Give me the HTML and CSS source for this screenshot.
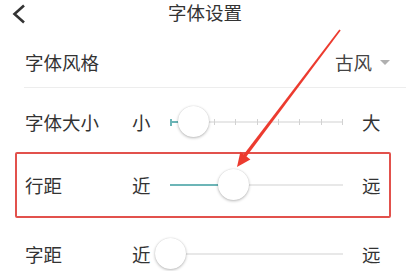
FILE: index.html
```html
<!DOCTYPE html>
<html lang="zh">
<head>
<meta charset="utf-8">
<link rel="stylesheet" href="styles.css">
</head>
<body>
<div class="page">
  <header class="header">
    <svg class="back" width="14" height="20" viewBox="0 0 14 20"><path d="M12 1.5 L2.5 10 L12 18.5" fill="none" stroke="#333" stroke-width="2.6" stroke-linejoin="miter"/></svg>
    <div class="title">字体设置</div>
    <span></span>
  </header>

  <div class="style-row">
    <span class="label">字体风格</span>
    <span class="value">古风<span class="caret"></span></span>
  </div>
  <div class="divider"></div>

  <div class="slider-row size-row">
    <span class="label">字体大小</span>
    <span class="small">小</span>
    <div class="track">
      <div class="line"></div>
      <div class="fill" style="width:23px"></div>
      <div class="ticks">
        <i class="on"></i><i></i><i></i><i></i><i></i><i></i><i></i><i></i><i></i>
      </div>
      <div class="thumb" style="left:23px"></div>
    </div>
    <span class="big">大</span>
  </div>

  <div class="slider-row boxed">
    <span class="label">行距</span>
    <span class="small">近</span>
    <div class="track">
      <div class="line"></div>
      <div class="fill" style="width:63px"></div>
      <div class="thumb" style="left:63px"></div>
    </div>
    <span class="big">远</span>
  </div>

  <div class="slider-row last-row">
    <span class="label">字距</span>
    <span class="small">近</span>
    <div class="track">
      <div class="line"></div>
      <div class="thumb" style="left:0px"></div>
    </div>
    <span class="big">远</span>
  </div>

  <svg class="arrow" width="406" height="271" viewBox="0 0 406 271">
    <polygon points="339.3,29.5 340.7,30.5 244.2,159.6 241.4,157.6" fill="#ec3b2f"/>
    <polygon points="237,167 240.4,151.8 250.4,159.4" fill="#ec3b2f"/>
  </svg>
</div>
</body>
</html>
```

FILE: styles.css
```css
* { box-sizing: border-box; }
html, body { margin: 0; padding: 0; background: #fff; }
body {
  font-family: "Noto Sans CJK SC", "Noto Sans", sans-serif;
  color: #333;
  width: 406px;
  height: 271px;
  overflow: hidden;
}
.page { position: relative; width: 406px; height: 271px; overflow: hidden; }

.header {
  height: 24px;
  display: grid;
  grid-template-columns: 40px 1fr 40px;
  align-items: center;
}
.back { margin-left: 12px; margin-top: 3px; }
.title {
  text-align: center;
  font-size: 18.5px;
  line-height: 24px;
  margin-left: 4px;
  margin-top: -1px;
}

.label, .small, .big, .value {
  font-size: 18.5px;
  line-height: 22px;
  color: #333;
}

.style-row {
  display: flex;
  align-items: center;
  justify-content: space-between;
  padding: 28px 16px 15px 25px;
  height: 63px;
}
.value { display: flex; align-items: center; color: #444; }
.caret {
  width: 0; height: 0;
  margin-left: 8px;
  border-left: 5px solid transparent;
  border-right: 5px solid transparent;
  border-top: 5px solid #b0b0b0;
}
.divider { margin-left: 24px; border-top: 1px solid #ededed; }

.slider-row {
  display: grid;
  grid-template-columns: 108px 37px 173px 1fr;
  align-items: center;
  padding-left: 25px;
}
.small { margin-left: -1px; }
.big { padding-left: 19px; }
.size-row { height: 64px; padding-top: 4px; }
.boxed {
  margin-left: 15px;
  width: 376px;
  height: 66px;
  border: 2px solid #e2514c;
  border-radius: 2px;
  padding-left: 8px;
}
.last-row { height: 53px; padding-top: 20px; align-items: start; }
.last-row .label, .last-row .small, .last-row .big { margin-top: 5px; }

.track { position: relative; height: 32px; }
.line {
  position: absolute; left: 0; right: 0; top: 15px;
  height: 2px; background: #e8e8e8;
}
.fill {
  position: absolute; left: 0; top: 15px;
  height: 2px; background: #6cb5b7;
}
.ticks {
  position: absolute; left: 0; right: 0; top: 13px;
  height: 6px;
  display: flex; justify-content: space-between;
}
.ticks i { display: block; width: 1px; height: 6px; background: #d2d2d2; }
.ticks i.on { background: #6cb5b7; width: 2px; height: 7px; }
.thumb {
  position: absolute; top: 0;
  width: 31px; height: 31px;
  margin-left: -15.5px;
  border-radius: 50%;
  background: #fff;
  box-shadow: 0 1px 3px rgba(0,0,0,0.28), 0 0 1px rgba(0,0,0,0.15);
  z-index: 2;
}

.arrow { position: absolute; left: 0; top: 0; pointer-events: none; z-index: 5; }
```
